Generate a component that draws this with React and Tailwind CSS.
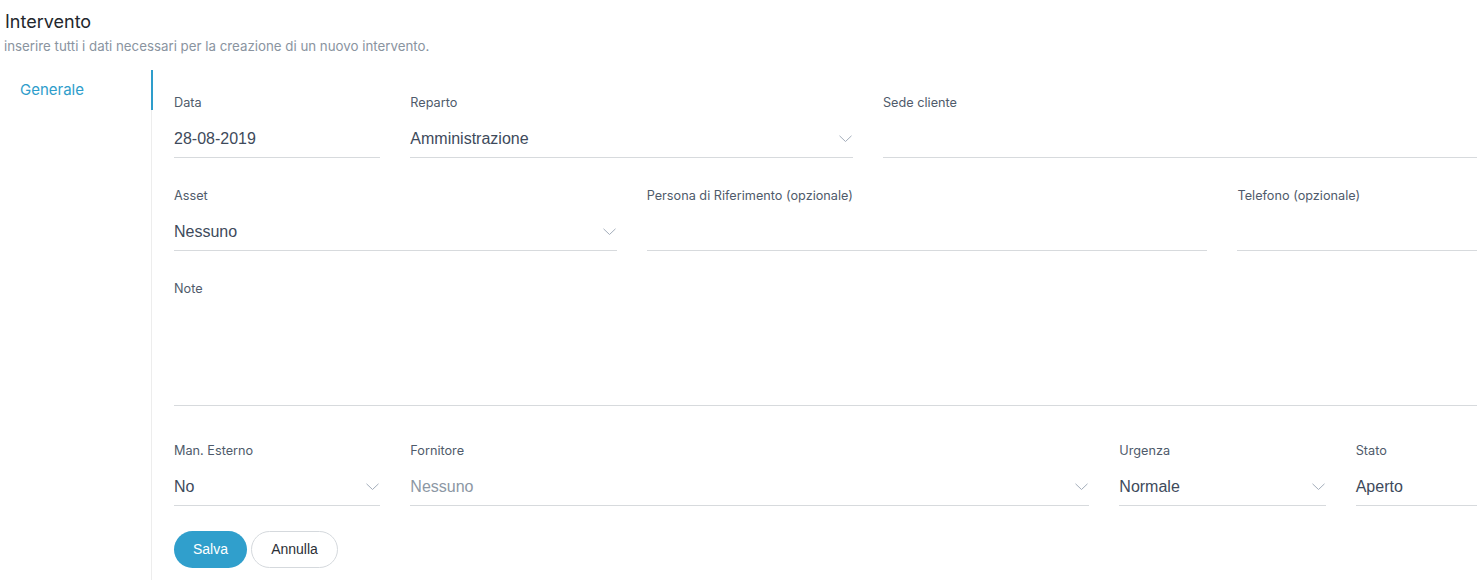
import React from 'react';

const labelFont = { fontFamily: 'Inter, "Noto Sans", sans-serif' };
const valueFont = { fontFamily: '"Liberation Sans", Arial, sans-serif' };

const Chevron = () => (
  <svg width="13" height="8" viewBox="0 0 13 8" className="text-[#a3adba]">
    <path d="M0.5 0.8 L6.5 6.5 L12.5 0.8" fill="none" stroke="currentColor" strokeWidth="1" />
  </svg>
);

const Field = ({ label, value, select, placeholder, span, className = 'mb-[30px]' }) => (
  <div className={`${span} ${className}`}>
    <div className="text-[12.7px] leading-[16px] text-[#4f5b6b] mb-[9px]" style={labelFont}>
      {label}
    </div>
    <div className="h-[38px] border-b border-[#d7dadd] flex items-center justify-between pr-[1px]">
      <span
        className={`text-[16px] ${placeholder ? 'text-[#8c97a4]' : 'text-[#3e4a5b]'}`}
        style={valueFont}
      >
        {value}
      </span>
      {select && <Chevron />}
    </div>
  </div>
);

export default function App() {
  return (
    <div className="w-full h-[580px] bg-white overflow-hidden">
      {/* Header */}
      <div className="pl-[4px] pt-[11px]">
        <h1 className="text-[18px] leading-[22px] text-[#23272d] pl-px" style={labelFont}>
          Intervento
        </h1>
        <p className="text-[13.3px] leading-[18px] mt-[4px] text-[#8a949f]" style={labelFont}>
          inserire tutti i dati necessari per la creazione di un nuovo intervento.
        </p>
      </div>

      <div className="flex mt-[15px]">
        {/* Sidebar */}
        <div className="w-[153px] shrink-0 relative z-10">
          <div className="h-[40px] border-r-2 border-[#2e9dcb] pl-[20px] pt-[7px]">
            <span className="text-[15px] text-[#2e9dcb]" style={labelFont}>Generale</span>
          </div>
        </div>

        {/* Form */}
        <div className="-ml-[2px] border-l border-[#ededed] pl-[22px] pt-[25px] h-[510px]">
          <div className="w-[1388px] grid grid-cols-12 gap-x-[30px]">
            <Field span="col-span-2" label="Data" value="28-08-2019" />
            <Field span="col-span-4" label="Reparto" value="Amministrazione" select />
            <Field span="col-span-6" label="Sede cliente" value="" />

            <Field span="col-span-4" label="Asset" value="Nessuno" select />
            <Field span="col-span-5" label="Persona di Riferimento (opzionale)" value="" />
            <Field span="col-span-3" label="Telefono (opzionale)" value="" />

            <div className="col-span-12 mb-[37px]">
              <div className="text-[12.7px] leading-[16px] text-[#4f5b6b] mb-[9px]" style={labelFont}>
                Note
              </div>
              <div className="h-[100px] border-b border-[#d7dadd]" />
            </div>

            <Field span="col-span-2" className="mb-[25px]" label="Man. Esterno" value="No" select />
            <Field span="col-span-6" className="mb-[25px]" label="Fornitore" value="Nessuno" select placeholder />
            <Field span="col-span-2" className="mb-[25px]" label="Urgenza" value="Normale" select />
            <Field span="col-span-2" className="mb-[25px]" label="Stato" value="Aperto" />
          </div>

          <div className="flex gap-[4px]">
            <button
              className="h-[37px] w-[73px] rounded-full bg-[#309fcc] text-white text-[14px]"
              style={valueFont}
            >
              Salva
            </button>
            <button
              className="h-[37px] w-[87px] rounded-full border border-[#d5d9dd] bg-white text-[#2b2f36] text-[14px]"
              style={valueFont}
            >
              Annulla
            </button>
          </div>
        </div>
      </div>
    </div>
  );
}
